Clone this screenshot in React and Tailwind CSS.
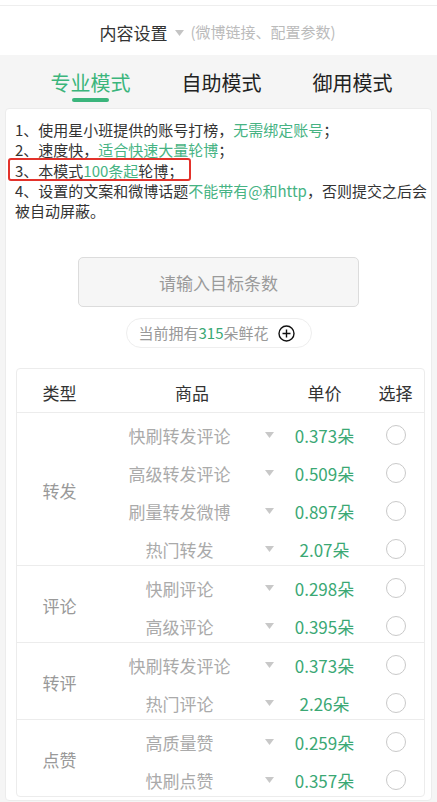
const groups = [
  {
    type: '转发',
    items: [
      { name: '快刷转发评论', price: '0.373' },
      { name: '高级转发评论', price: '0.509' },
      { name: '刷量转发微博', price: '0.897' },
      { name: '热门转发', price: '2.07' },
    ],
  },
  {
    type: '评论',
    items: [
      { name: '快刷评论', price: '0.298' },
      { name: '高级评论', price: '0.395' },
    ],
  },
  {
    type: '转评',
    items: [
      { name: '快刷转发评论', price: '0.373' },
      { name: '热门评论', price: '2.26' },
    ],
  },
  {
    type: '点赞',
    items: [
      { name: '高质量赞', price: '0.259' },
      { name: '快刷点赞', price: '0.357' },
    ],
  },
];

function Caret({ className }) {
  return (
    <svg width="9" height="6" viewBox="0 0 9 6" className={className}>
      <polygon points="0,0 9,0 4.5,6" fill="currentColor" />
    </svg>
  );
}

function Tabs() {
  const tabs = ['专业模式', '自助模式', '御用模式'];
  return (
    <div className="flex pl-[25px] pt-[14px]">
      {tabs.map((t, i) => (
        <div key={t} className="w-[131px] flex flex-col items-center">
          <div className={`text-[20px] leading-[28px] ${i === 0 ? 'text-[#3bb57c]' : 'text-[#222]'}`}>{t}</div>
          <div className={`mt-[1px] h-[4px] w-[37px] rounded-full ${i === 0 ? 'bg-[#3bb57c]' : 'bg-transparent'}`} />
        </div>
      ))}
    </div>
  );
}

function Intro() {
  const g = 'text-[#46b383]';
  return (
    <div className="px-[9px] pt-[11px] text-[15px] leading-[20.3px] text-[#333] whitespace-nowrap">
      <div>1、使用星小班提供的账号打榜，<span className={g}>无需绑定账号</span>；</div>
      <div>2、速度快，<span className={g}>适合快速大量轮博</span>；</div>
      <div className="relative">
        3、本模式<span className={g}>100条起</span>轮博；
        <div className="absolute left-[-7px] top-[-3px] w-[183px] h-[23px] border-2 border-[#e3322b] rounded-[3px]" />
      </div>
      <div>4、设置的文案和微博话题<span className={g}>不能带有@和http</span>，否则提交之后会</div>
      <div>被自动屏蔽。</div>
    </div>
  );
}

function Radio() {
  return <div className="w-[20px] h-[20px] rounded-full border-[1.5px] border-[#c9c9c9]" />;
}

function Table() {
  return (
    <div className="ml-[10px] mr-[6px] mt-[20px] border border-[#ececec] rounded-[4px] text-[17px]">
      <div className="flex h-[44px] pt-[3px] items-center text-[#333] border-b border-[#ececec]">
        <div className="w-[85px] text-center">类型</div>
        <div className="w-[180px] text-center">商品</div>
        <div className="w-[85px] text-center">单价</div>
        <div className="flex-1 text-center">选择</div>
      </div>
      {groups.map((grp, gi) => (
        <div key={gi} className={`flex ${gi < groups.length - 1 ? 'border-b border-[#ececec]' : ''}`}>
          <div className="w-[85px] flex items-center justify-center pt-[2px] text-[#999]">{grp.type}</div>
          <div className="flex-1">
            {grp.items.map((it, ii) => (
              <div key={ii} className="flex h-[38px] pt-[6px] items-center">
                <div className="w-[155px] text-center text-[#aaa]">{it.name}</div>
                <div className="w-[25px] flex justify-center">
                  <Caret className="text-[#c8c8c8]" />
                </div>
                <div className="w-[85px] text-center text-[#3aa874]">{it.price}朵</div>
                <div className="flex-1 flex justify-center">
                  <Radio />
                </div>
              </div>
            ))}
          </div>
        </div>
      ))}
    </div>
  );
}

export default function App() {
  return (
    <div
      className="w-[437px] h-[802px] overflow-hidden bg-[#f5f5f5]"
      style={{ fontFamily: '"Noto Sans CJK SC", "Noto Sans", sans-serif' }}
    >
      <div className="bg-white h-[55px]">
        <div className="h-[5px]" />
        <div className="border-t border-[#eeeeee] h-[50px] flex items-center justify-center pt-[4px] pr-[2px]">
          <span className="text-[17px] text-[#333]">内容设置</span>
          <Caret className="text-[#c4c4c4] ml-[8px] mr-[6px]" />
          <span className="text-[15px] text-[#bbb]">(微博链接、配置参数)</span>
        </div>
      </div>

      <Tabs />

      <div className="mt-[6px] ml-[5px] mr-[5px] bg-white rounded-[4px] border border-[#ececec] pb-[3px]">
        <Intro />

        <div className="mt-[36px] mx-auto w-[281px] h-[50px] rounded-[5px] bg-[#f6f6f6] border border-[#dcdcdc] flex items-center justify-center text-[17px] text-[#9a9a9a]">
          请输入目标条数
        </div>

        <div className="mt-[11px] mx-auto w-[186px] h-[30px] rounded-full border border-[#eeeeee] flex items-center pl-[12px] text-[15px] text-[#999]">
          <span>当前拥有<span className="text-[#3aa874]">315</span>朵鲜花</span>
          <svg width="17" height="17" viewBox="0 0 17 17" className="ml-[9px]">
            <circle cx="8.5" cy="8.5" r="7.5" fill="none" stroke="#111" strokeWidth="1.4" />
            <path d="M8.5 4.5v8M4.5 8.5h8" stroke="#111" strokeWidth="1.4" />
          </svg>
        </div>

        <Table />
      </div>
    </div>
  );
}
